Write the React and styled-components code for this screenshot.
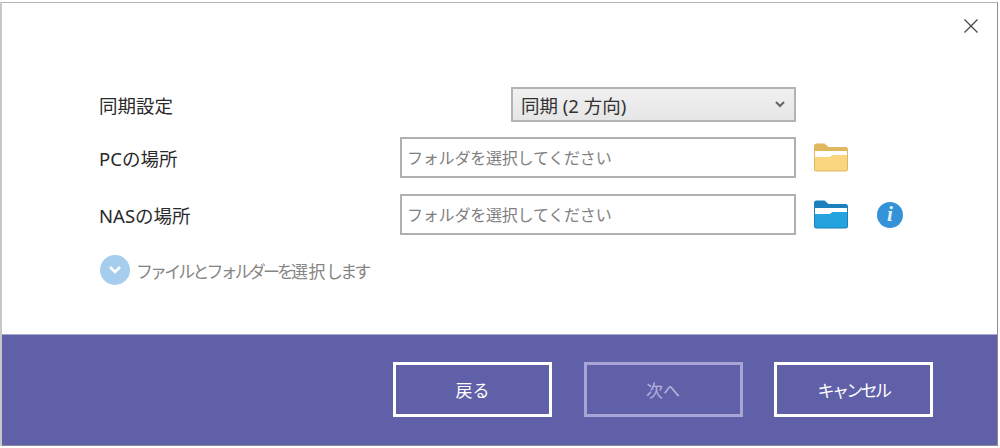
import React from "react";
import styled, { createGlobalStyle } from "styled-components";

const FONT = `"Noto Sans", "Noto Sans CJK JP", sans-serif`;

const FolderIcon = ({ back, front }) => (
  <svg width="36" height="29" viewBox="0 0 36 29">
    <path d="M1 3a2.500 2.500 0 0 1 2.500-2.500h8l4 3.500h17a2.500 2.500 0 0 1 2.500 2.500v19.500a2.500 2.500 0 0 1-2.500 2.500h-29a2.500 2.500 0 0 1-2.500-2.500z" fill={back} />
    <path d="M2 8h32v4h-14l-3 2h-15z" fill="#fff" />
    <path d="M2 14h15l3-2h14v14.500a1 1 0 0 1-1 1h-30a1 1 0 0 1-1-1z" fill={front} />
  </svg>
);

const App = () => {
  return (
    <Window>
      <GlobalStyle />
      <Body>
        <CloseRow>
          <svg width="16" height="16" viewBox="0 0 16 16">
            <path d="M1.500 1.500l13 13M14.500 1.500l-13 13" stroke="#444" strokeWidth="1.200" fill="none" />
          </svg>
        </CloseRow>
        <SelectRow>
          <Label>同期設定</Label>
          <Select>
            <span>同期 (2 方向)</span>
            <svg width="10" height="7" viewBox="0 0 10 7">
              <path d="M1 1l4 4 4-4" stroke="#666" strokeWidth="2" fill="none" />
            </svg>
          </Select>
        </SelectRow>
        <Row>
          <Label>PCの場所</Label>
          <PathInput placeholder="フォルダを選択してください" />
          <FolderIcon back="#dfb75e" front="#fad680" />
        </Row>
        <Row>
          <Label>NASの場所</Label>
          <PathInput placeholder="フォルダを選択してください" />
          <FolderIcon back="#1b80bb" front="#25a3de" />
          <Info>i</Info>
        </Row>
        <Expander>
          <Round>
            <svg width="14" height="10" viewBox="0 0 14 10">
              <path d="M2 2l5 5 5-5" stroke="#fff" strokeWidth="2.600" fill="none" />
            </svg>
          </Round>
          <span>
            ファイルとフォルダーを<Kanji>選択</Kanji>します
          </span>
        </Expander>
      </Body>
      <Footer>
        <FooterButton>戻る</FooterButton>
        <FooterButton disabled>次へ</FooterButton>
        <FooterButton $narrow>キャンセル</FooterButton>
      </Footer>
    </Window>
  );
};

export default App;

const GlobalStyle = createGlobalStyle`
  html, body {
    margin: 0;
    background: #fff;
  }
  * {
    box-sizing: border-box;
  }
`;

const Window = styled.div`
  width: 996px;
  height: 444px;
  margin: 2px 0 0 2px;
  border-top: 1px solid #b4b4b4;
  border-right: 1px solid #8c8c8c;
  box-shadow: -2px 0 0 #c8c8c8;
  display: flex;
  flex-direction: column;
  font-family: ${FONT};
`;

const Body = styled.div`
  flex: 1;
  padding: 15px 0 0 97px;
  background: #fff;
`;

const CloseRow = styled.div`
  display: flex;
  justify-content: flex-end;
  padding-right: 18px;
  height: 68px;
  margin-bottom: 1px;
`;

const SelectRow = styled.div`
  display: flex;
  align-items: center;
  height: 35px;
  margin-bottom: 15px;
`;

const Row = styled.div`
  display: flex;
  align-items: center;
  height: 41px;
  margin-bottom: 16px;
`;

const Label = styled.div`
  width: 301px;
  font-size: 18.500px;
  color: #2a2a2a;
`;

const Select = styled.div`
  width: 285px;
  height: 35px;
  margin-left: 111px;
  padding: 0 9px 0 8px;
  display: flex;
  align-items: center;
  justify-content: space-between;
  border: 2px solid #b4b4b4;
  background: linear-gradient(#f0f0f0, #e6e6e6);
  font-size: 18.500px;
  color: #333;
`;

const PathInput = styled.input`
  width: 396px;
  height: 41px;
  margin-right: 17px;
  padding: 0 5px;
  border: 2px solid #b0b0b0;
  background: #fff;
  font-family: ${FONT};
  font-size: 16px;
  letter-spacing: -0.200px;
  outline: none;

  &::placeholder {
    color: #808080;
    opacity: 1;
  }
`;

const Info = styled.div`
  width: 26px;
  height: 26px;
  margin-left: 28px;
  border-radius: 50%;
  background: #3492d8;
  color: #e4f1fb;
  display: flex;
  align-items: center;
  justify-content: center;
  font-family: "Liberation Serif", serif;
  font-style: italic;
  font-weight: bold;
  font-size: 21px;
`;

const Expander = styled.div`
  display: flex;
  align-items: center;
  gap: 6px;
  margin: 20px 0 0 1px;
  font-size: 17px;
  letter-spacing: -2.900px;
  color: #858585;
`;

const Kanji = styled.span`
  letter-spacing: 0.500px;
`;

const Round = styled.div`
  width: 30px;
  height: 30px;
  border-radius: 50%;
  background: #a6cdee;
  display: flex;
  align-items: center;
  justify-content: center;
`;

const Footer = styled.div`
  height: 112px;
  flex-shrink: 0;
  padding: 27px 64px 0 0;
  background: #6060a8;
  border-top: 1px solid #a9a9cf;
  border-bottom: 1px solid #8a8a9a;
  display: flex;
  justify-content: flex-end;
  align-items: flex-start;
  gap: 31.500px;
`;

const FooterButton = styled.button`
  width: 159px;
  height: 55px;
  border: 3px solid ${(p) => (p.disabled ? "#a8a4d6" : "#fff")};
  background: transparent;
  color: ${(p) => (p.disabled ? "#b5b2dc" : "#fff")};
  font-family: ${FONT};
  font-size: 17px;
  letter-spacing: ${(p) => (p.$narrow ? "-2.600px" : "0")};
`;
